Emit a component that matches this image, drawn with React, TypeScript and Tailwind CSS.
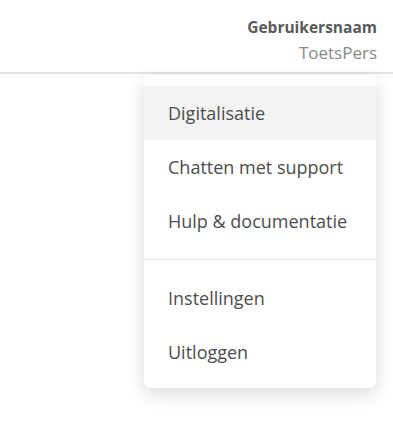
import React from "react";

export default function App() {
  const items1 = ["Digitalisatie", "Chatten met support", "Hulp & documentatie"];
  const items2 = ["Instellingen", "Uitloggen"];
  return (
    <div className="w-[393px] h-[427px] bg-white overflow-hidden" style={{ fontFamily: '"Open Sans", "Noto Sans", sans-serif' }}>
      <header className="h-[74px] border-b-2 border-[#e3e3e3] flex flex-col items-end pr-4 pt-[15px]">
        <div className="text-[15.5px] font-bold text-[#5a5a5a] leading-[24px]">Gebruikersnaam</div>
        <div className="text-[17px] text-[#888] leading-[26px] mt-[1px]">ToetsPers</div>
      </header>
      <div className="flex justify-end pr-[17px] pt-[1px]">
        <div className="w-[232px] bg-white rounded-md shadow-[0_6px_18px_rgba(0,0,0,0.14)] pt-[11px] pb-[9px]">
          {items1.map((t, i) => (
            <div
              key={t}
              className={`h-[54px] flex items-center pl-6 text-[18px] text-[#4d4d4d] ${i === 0 ? "bg-[#f3f3f4]" : ""}`}
            >
              {t}
            </div>
          ))}
          <div className="my-[11px] h-px bg-[#ececec]" />
          {items2.map((t) => (
            <div key={t} className="h-[54px] flex items-center pl-6 text-[18px] text-[#4d4d4d]">
              {t}
            </div>
          ))}
        </div>
      </div>
    </div>
  );
}
